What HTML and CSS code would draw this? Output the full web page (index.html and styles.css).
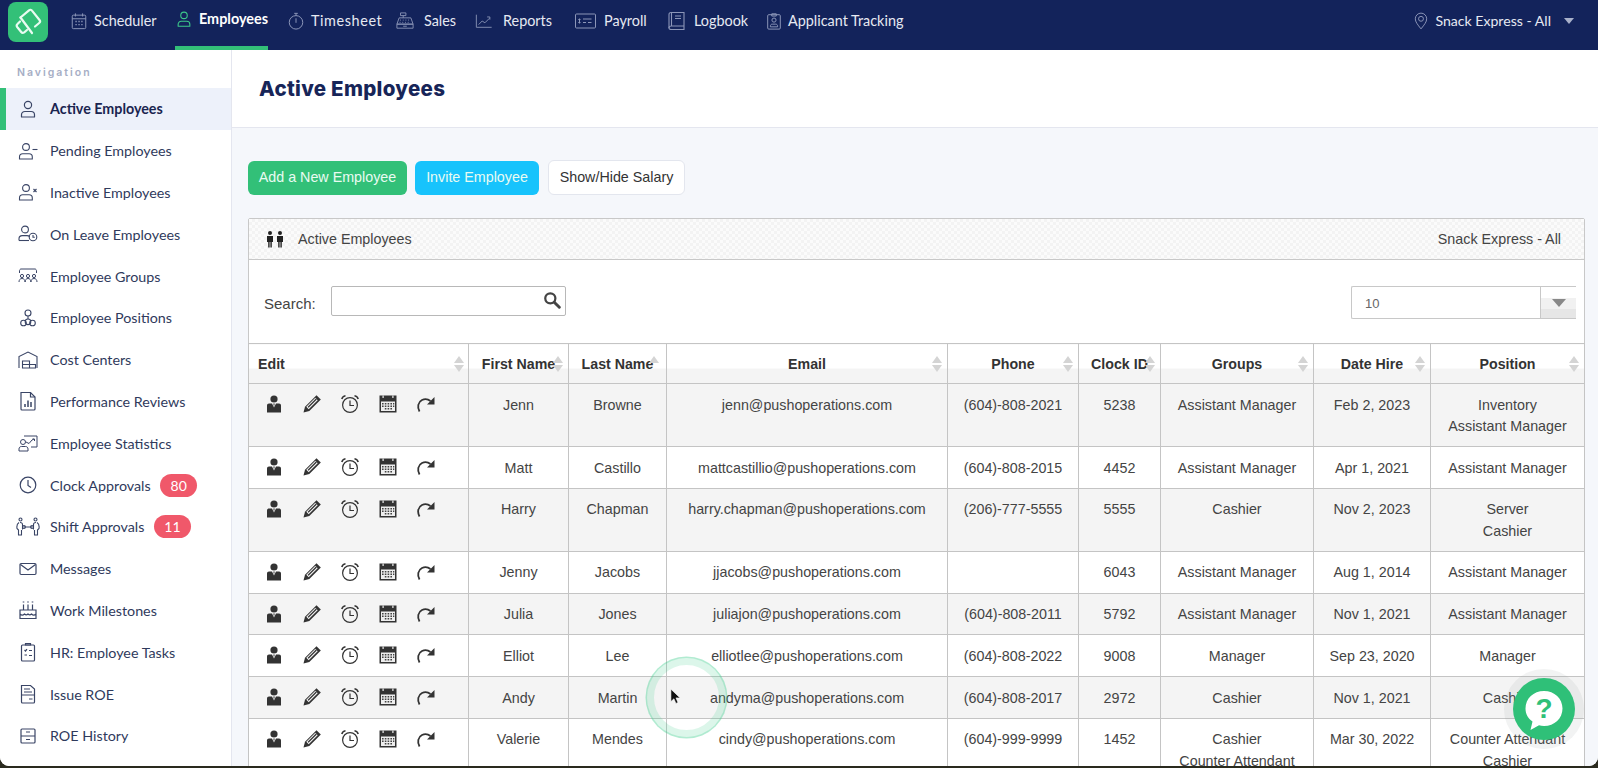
FILE: index.html
```html
<!DOCTYPE html>
<html lang="en">
<head>
<meta charset="utf-8">
<title>Active Employees</title>
<link rel="stylesheet" href="styles.css">
</head>
<body>
<svg class="defs" width="0" height="0" aria-hidden="true">
  <symbol id="i-user" viewBox="0 0 20 20"><g fill="none" stroke="currentColor" stroke-width="1.2"><circle cx="10" cy="6" r="3.6"/><path d="M3.5 18v-2.2c0-2 1.5-3.3 3.4-3.3h6.2c1.9 0 3.4 1.3 3.4 3.3V18z" stroke-linejoin="round"/></g></symbol>
  <symbol id="i-pending" viewBox="0 0 20 20"><g fill="none" stroke="currentColor" stroke-width="1.1"><circle cx="8" cy="6" r="3.4"/><path d="M1.5 18v-2c0-2 1.4-3.2 3.2-3.2h6.4c1.8 0 3.2 1.2 3.2 3.2v2z"/><path d="M14.5 8.5h5"/></g></symbol>
  <symbol id="i-inactive" viewBox="0 0 20 20"><g fill="none" stroke="currentColor" stroke-width="1.1"><circle cx="8" cy="6" r="3.4"/><path d="M1.5 18v-2c0-2 1.4-3.2 3.2-3.2h6.4c1.8 0 3.2 1.2 3.2 3.2v2z"/><path d="M15.5 7l3 3m0-3l-3 3"/></g></symbol>
  <symbol id="i-leave" viewBox="0 0 20 20"><g fill="none" stroke="currentColor" stroke-width="1.1"><circle cx="7" cy="5.5" r="3.4"/><path d="M1 16.5v-1.7c0-2 1.4-3.2 3.2-3.2H9c1 0 2 .3 2.6 1"/><path d="M1 16.5h10"/><circle cx="15" cy="13" r="3.8"/><path d="M15 11v2.2h1.8"/></g></symbol>
  <symbol id="i-groups" viewBox="0 0 20 20"><g fill="none" stroke="currentColor" stroke-width="1"><path d="M1.5 7V4.8C1.500 3.900 2.200 3 3 3h14c.8 0 1.500.9 1.500 1.800V7"/><circle cx="4" cy="10" r="1.600"/><circle cx="10" cy="10" r="1.600"/><circle cx="16" cy="10" r="1.600"/><path d="M1 16c0-2 1-3.500 3-3.500S7 14 7 16M7.200 16c0-2 .8-3.500 2.800-3.500s2.800 1.500 2.800 3.500M13 16c0-2 1-3.500 3-3.500s3 1.500 3 3.500"/></g></symbol>
  <symbol id="i-positions" viewBox="0 0 20 20"><g fill="none" stroke="currentColor" stroke-width="1.1"><circle cx="10" cy="5" r="3"/><path d="M10 8v3"/><circle cx="5.500" cy="15" r="2.800"/><circle cx="14.500" cy="15" r="2.800"/><circle cx="10" cy="13.800" r="2.800"/></g></symbol>
  <symbol id="i-cost" viewBox="0 0 20 20"><g fill="none" stroke="currentColor" stroke-width="1.1"><path d="M1 18V6.500L10 2l9 4.500V18"/><path d="M4.500 11h7v7h-7zM4.500 14.500h13V18h-6"/></g></symbol>
  <symbol id="i-review" viewBox="0 0 20 20"><g fill="none" stroke="currentColor" stroke-width="1.200"><path d="M3 1.500h9.500L17 6v12a1 1 0 0 1-1 1H4a1 1 0 0 1-1-1z"/><path d="M12.500 1.500V6H17"/><path d="M7 16v-3M10 16V9.500M13 16v-5" stroke-width="1.500"/></g></symbol>
  <symbol id="i-stats" viewBox="0 0 20 20"><g fill="none" stroke="currentColor" stroke-width="1"><path d="M6 3h13v11h-6"/><circle cx="5" cy="9" r="2.500"/><path d="M1 18v-2c0-1.500 1-2.500 2.500-2.500h4c1.500 0 2.500 1 2.500 2.500v2z"/><path d="M8 9l3 1.500L14 7l2-1m-1.500 0H16.500V8"/></g></symbol>
  <symbol id="i-clock" viewBox="0 0 20 20"><g fill="none" stroke="currentColor" stroke-width="1.200"><circle cx="10" cy="10" r="7.800"/><path d="M10 5v5.500l3 2"/></g></symbol>
  <symbol id="i-shift" viewBox="0 0 24 20"><g fill="none" stroke="currentColor" stroke-width="1.100"><circle cx="4.500" cy="2.500" r="1.500"/><circle cx="19.500" cy="2.500" r="1.500"/><path d="M3 5.500c-1.500 1-2.500 3-2 6l1.500 1.500v5h3v-5M21 5.500c1.500 1 2.500 3 2 6L21.500 13v5h-3v-5"/><path d="M4 5.500c1.500 0 2.500 1 2.500 2v5M20 5.500c-1.500 0-2.500 1-2.500 2v5"/><path d="M8 10h8"/><circle cx="8" cy="10" r="1.400"/><circle cx="16" cy="10" r="1.400"/></g></symbol>
  <symbol id="i-mail" viewBox="0 0 20 20"><g fill="none" stroke="currentColor" stroke-width="1.200"><rect x="2" y="4.500" width="16" height="11" rx="1.200"/><path d="M2.500 5.500L10 11l7.500-5.500"/></g></symbol>
  <symbol id="i-cake" viewBox="0 0 20 20"><g fill="none" stroke="currentColor" stroke-width="1.200"><path d="M2 18.500h16V10H2zM2 14c1.500 1.500 3 1.500 4.500 0 1.200 1.200 2.300 1.200 3.500 0 1.200 1.200 2.300 1.200 3.500 0 1.500 1.500 3 1.500 4.500 0"/><path d="M5.500 10V4.500M10 10V4.500M14.500 10V4.500"/><path d="M5.500 1.500v1M10 1.500v1M14.500 1.500v1" stroke-width="1.600"/></g></symbol>
  <symbol id="i-tasks" viewBox="0 0 20 20"><g fill="none" stroke="currentColor" stroke-width="1.200"><rect x="3.500" y="3" width="13" height="16" rx="1"/><path d="M7.500 3V1.500h5V3z"/><path d="M6.500 8l1 1 1.500-1.800M11 8.500h3M6.500 13h2.500M11 13.500h3"/></g></symbol>
  <symbol id="i-roe" viewBox="0 0 20 20"><g fill="none" stroke="currentColor" stroke-width="1.200"><path d="M3.500 1.500h9L16.500 5v13a1 1 0 0 1-1 1h-11a1 1 0 0 1-1-1z"/><path d="M6 5h6M6 8h8M3.500 11h13M11 15h3.500" /></g></symbol>
  <symbol id="i-history" viewBox="0 0 20 20"><g fill="none" stroke="currentColor" stroke-width="1.200"><rect x="3" y="3" width="14" height="14" rx="1"/><path d="M3 10h14M8 6h4M8 13.500h4"/></g></symbol>
  <symbol id="i-cal" viewBox="0 0 20 20"><g fill="none" stroke="currentColor" stroke-width="1.100"><rect x="2.500" y="3.500" width="15" height="15" rx="1.200"/><path d="M2.500 7.500h15M6 1.500v3.500M14 1.500v3.500"/><path d="M6 10.500h1.500M9.300 10.500h1.500M12.500 10.500H14M6 14h1.500M9.300 14h1.500M12.500 14H14" stroke-width="1.600"/></g></symbol>
  <symbol id="i-timer" viewBox="0 0 20 20"><g fill="none" stroke="currentColor" stroke-width="1.100"><circle cx="10" cy="11.500" r="7.500"/><path d="M10 7v5M8 1.500h4M10 1.500V4"/></g></symbol>
  <symbol id="i-sales" viewBox="0 0 20 20"><g fill="none" stroke="currentColor" stroke-width="1"><path d="M5 1h6v3H5zM8 4v2.500"/><path d="M3.500 6.500h13l2.500 7H1z"/><path d="M1 13.500h18V18H1z"/><path d="M4.500 9h1M7.500 9h1M10.500 9h1M13.500 9h1M4 11.500h1M7 11.500h1M10 11.500h1M13 11.500h1M8 15.800h4"/></g></symbol>
  <symbol id="i-reports" viewBox="0 0 20 20"><g fill="none" stroke="currentColor" stroke-width="1"><path d="M1.500 3v14h17"/><path d="M4 14l4-4 3 2 5-5M13.500 5.500h3v3"/></g></symbol>
  <symbol id="i-payroll" viewBox="0 0 22 20"><g fill="none" stroke="currentColor" stroke-width="1"><rect x="1" y="3" width="20" height="14" rx="1"/><path d="M8.500 8h8.500M8.500 11.500h3M13.500 11.500h3.500M5 7.500v5M3.800 8.500H6M3.800 11.500H6"/></g></symbol>
  <symbol id="i-book" viewBox="0 0 20 20"><g fill="none" stroke="currentColor" stroke-width="1.100"><path d="M4 1.500h13V15H4.500C3 15 2 16 2 17s1 1.500 2.500 1.500H17V15"/><path d="M2 17V3.500c0-1 1-2 2-2"/><path d="M4.500 1.500V15M8 5h6M8 7.500h6"/></g></symbol>
  <symbol id="i-badge" viewBox="0 0 20 20"><g fill="none" stroke="currentColor" stroke-width="1.100"><rect x="3" y="3" width="14" height="16" rx="1.200"/><path d="M7.500 4.500V2h5v2.500z"/><circle cx="10" cy="9" r="2.300"/><path d="M6 16.500v-1c0-1 .8-2 2-2h4c1.200 0 2 1 2 2v1z"/></g></symbol>
  <symbol id="i-pin" viewBox="0 0 16 20"><g fill="none" stroke="currentColor" stroke-width="1.100"><path d="M8 19C4 14 1.500 11 1.500 7.500a6.500 6.500 0 0 1 13 0C14.500 11 12 14 8 19z"/><circle cx="8" cy="7.500" r="2.800"/></g></symbol>
  <symbol id="i-a-person" viewBox="0 0 20 20"><g fill="#333"><circle cx="10" cy="5" r="3.600"/><path d="M3 18.500v-7c0-1.200.8-2 2-2h3l2 4 2-4h3c1.200 0 2 .8 2 2v7z"/><path d="M9.300 9.500h1.400l-.7 3.500z" fill="#333"/></g></symbol>
  <symbol id="i-a-pencil" viewBox="0 0 20 20"><path d="M1.500 18.500l1.500-5.800L14.500 1.200l4.300 4.300L7.300 17z" fill="#333"/><path d="M4.300 12.800l9-9 2.400 2.400-9 9z" fill="#f4f4f4"/><path d="M5.700 12.800l8.200-8.200.9.900-8.200 8.200z" fill="#333"/></symbol>
  <symbol id="i-a-alarm" viewBox="0 0 20 20"><g fill="none" stroke="#333" stroke-width="1.200"><circle cx="10" cy="11" r="7.400"/><path d="M10 6.500V11.500h4"/><path d="M1.800 5c.5-1.800 1.800-3 3.700-3.300M18.200 5c-.5-1.800-1.800-3-3.700-3.300" stroke-width="1.600"/></g></symbol>
  <symbol id="i-a-cal" viewBox="0 0 20 20"><path fill="#333" d="M1.500 1.500h17v17h-17z"/><path fill="#eee" d="M3 7.500h14v9.500H3z"/><g fill="#444"><path d="M4 9h1.600v1.400H4zM6.800 9h1.600v1.400H6.800zM9.600 9h1.600v1.400H9.600zM12.400 9H14v1.400h-1.600zM15 9h1.300v1.400H15zM4 11.500h1.600v1.400H4zM6.800 11.500h1.600v1.400H6.800zM9.600 11.500h1.600v1.400H9.600zM12.400 11.500H14v1.400h-1.600zM15 11.500h1.300v1.400H15zM6.800 14h1.600v1.400H6.800zM9.600 14h1.600v1.400H9.600zM12.400 14H14v1.400h-1.600z"/></g><path fill="#eee" d="M4.500 1.500h1.200v2.500H4.500zM14.300 1.500h1.200v2.500h-1.200z"/></symbol>
  <symbol id="i-a-redo" viewBox="0 0 20 20"><path fill="none" stroke="#333" stroke-width="1.800" d="M3.500 17.500C1 13 2 8 6 6c3-1.500 6-1 8.500 1"/><path fill="#333" d="M18.500 3v7.500H11z"/></symbol>
</svg>

<div class="page">
  <header class="topbar">
    <div class="logo">
      <svg viewBox="0 0 40 40" width="40" height="40"><g fill="none" stroke="#e9fbf1" stroke-width="2.200" stroke-linejoin="round" stroke-linecap="round"><path d="M12.500 15.500L21 8.300c1-.8 2.300-.7 3 .3L31.500 18c.8 1 .7 2.200-.3 3L27 24.500"/><path d="M12.500 15.500L24 31"/><path d="M12 19.500L9.500 22c-1 .9-1 2-.3 3l4 5c.8 1 2 1 3 .3L19 28"/></g></svg>
    </div>
    <nav class="topnav">
      <a class="tn tn-sch"><svg class="ti"><use href="#i-cal"/></svg>Scheduler</a>
      <a class="tn tn-emp active"><svg class="ti"><use href="#i-user"/></svg>Employees</a>
      <a class="tn tn-time"><svg class="ti"><use href="#i-timer"/></svg>Timesheet</a>
      <a class="tn tn-sal"><svg class="ti"><use href="#i-sales"/></svg>Sales</a>
      <a class="tn tn-rep"><svg class="ti"><use href="#i-reports"/></svg>Reports</a>
      <a class="tn tn-pay"><svg class="ti"><use href="#i-payroll"/></svg>Payroll</a>
      <a class="tn tn-log"><svg class="ti"><use href="#i-book"/></svg>Logbook</a>
      <a class="tn tn-app"><svg class="ti"><use href="#i-badge"/></svg>Applicant Tracking</a>
    </nav>
    <div class="loc"><svg class="pin"><use href="#i-pin"/></svg><span>Snack Express - All</span><i class="caret"></i></div>
  </header>

  <div class="body">
    <aside class="side">
      <div class="side-label">Navigation</div>
      <a class="si current"><svg class="sic"><use href="#i-user"/></svg>Active Employees</a>
      <a class="si"><svg class="sic"><use href="#i-pending"/></svg>Pending Employees</a>
      <a class="si"><svg class="sic"><use href="#i-inactive"/></svg>Inactive Employees</a>
      <a class="si"><svg class="sic"><use href="#i-leave"/></svg>On Leave Employees</a>
      <a class="si"><svg class="sic"><use href="#i-groups"/></svg>Employee Groups</a>
      <a class="si"><svg class="sic"><use href="#i-positions"/></svg>Employee Positions</a>
      <a class="si"><svg class="sic"><use href="#i-cost"/></svg>Cost Centers</a>
      <a class="si"><svg class="sic"><use href="#i-review"/></svg>Performance Reviews</a>
      <a class="si"><svg class="sic"><use href="#i-stats"/></svg>Employee Statistics</a>
      <a class="si"><svg class="sic"><use href="#i-clock"/></svg>Clock Approvals<b class="badge">80</b></a>
      <a class="si"><svg class="sic wide"><use href="#i-shift"/></svg>Shift Approvals<b class="badge">11</b></a>
      <a class="si"><svg class="sic"><use href="#i-mail"/></svg>Messages</a>
      <a class="si"><svg class="sic"><use href="#i-cake"/></svg>Work Milestones</a>
      <a class="si"><svg class="sic"><use href="#i-tasks"/></svg>HR: Employee Tasks</a>
      <a class="si"><svg class="sic"><use href="#i-roe"/></svg>Issue ROE</a>
      <a class="si"><svg class="sic"><use href="#i-history"/></svg>ROE History</a>
    </aside>

    <main class="main">
      <div class="page-head"><h1>Active Employees</h1></div>
      <div class="content">
        <div class="actions">
          <button class="btn green">Add a New Employee</button>
          <button class="btn blue">Invite Employee</button>
          <button class="btn plain">Show/Hide Salary</button>
        </div>
        <section class="panel">
          <div class="panel-head">
            <span class="ph-left">
              <svg class="people" viewBox="0 0 20 18"><g fill="#222"><circle cx="5" cy="3" r="2"/><circle cx="15" cy="3" r="2"/><path d="M2 6h6v6H6.800v5.500H5.400V12h-.8v5.500H3.200V12H2zM12 6h6v6h-1.200v5.500h-1.400V12h-.8v5.500h-1.400V12H12z"/></g></svg>
              Active Employees
            </span>
            <span>Snack Express - All</span>
          </div>
          <div class="filters">
            <label class="search">Search:
              <span class="search-box">
                <svg class="mag" viewBox="0 0 16 16"><circle cx="6.500" cy="6.500" r="4.500" fill="none" stroke="#444" stroke-width="2"/><path d="M10 10l4.500 4.500" stroke="#444" stroke-width="2.600" stroke-linecap="round"/></svg>
              </span>
            </label>
            <div class="select"><span class="sel-val">10</span><span class="sel-btn"><i></i></span></div>
          </div>
          <table class="grid">
            <colgroup>
              <col class="c1"><col class="c2"><col class="c3"><col class="c4"><col class="c5"><col class="c6"><col class="c7"><col class="c8"><col class="c9">
            </colgroup>
            <thead>
              <tr>
                <th class="left sort tail">Edit</th>
                <th class="sort">First Name</th>
                <th class="asc">Last Name</th>
                <th class="sort">Email</th>
                <th class="sort">Phone</th>
                <th class="sort">Clock ID</th>
                <th class="sort">Groups</th>
                <th class="sort">Date Hire</th>
                <th class="sort">Position</th>
              </tr>
            </thead>
            <tbody>
              <tr class="odd">
                <td class="acts"><svg><use href="#i-a-person"/></svg><svg><use href="#i-a-pencil"/></svg><svg><use href="#i-a-alarm"/></svg><svg><use href="#i-a-cal"/></svg><svg><use href="#i-a-redo"/></svg></td>
                <td>Jenn</td><td>Browne</td><td>jenn@pushoperations.com</td><td>(604)-808-2021</td><td>5238</td><td>Assistant Manager</td><td>Feb 2, 2023</td><td>Inventory<br>Assistant Manager</td>
              </tr>
              <tr>
                <td class="acts"><svg><use href="#i-a-person"/></svg><svg><use href="#i-a-pencil"/></svg><svg><use href="#i-a-alarm"/></svg><svg><use href="#i-a-cal"/></svg><svg><use href="#i-a-redo"/></svg></td>
                <td>Matt</td><td>Castillo</td><td>mattcastillio@pushoperations.com</td><td>(604)-808-2015</td><td>4452</td><td>Assistant Manager</td><td>Apr 1, 2021</td><td>Assistant Manager</td>
              </tr>
              <tr class="odd">
                <td class="acts"><svg><use href="#i-a-person"/></svg><svg><use href="#i-a-pencil"/></svg><svg><use href="#i-a-alarm"/></svg><svg><use href="#i-a-cal"/></svg><svg><use href="#i-a-redo"/></svg></td>
                <td>Harry</td><td>Chapman</td><td>harry.chapman@pushoperations.com</td><td>(206)-777-5555</td><td>5555</td><td>Cashier</td><td>Nov 2, 2023</td><td>Server<br>Cashier</td>
              </tr>
              <tr>
                <td class="acts"><svg><use href="#i-a-person"/></svg><svg><use href="#i-a-pencil"/></svg><svg><use href="#i-a-alarm"/></svg><svg><use href="#i-a-cal"/></svg><svg><use href="#i-a-redo"/></svg></td>
                <td>Jenny</td><td>Jacobs</td><td>jjacobs@pushoperations.com</td><td></td><td>6043</td><td>Assistant Manager</td><td>Aug 1, 2014</td><td>Assistant Manager</td>
              </tr>
              <tr class="odd">
                <td class="acts"><svg><use href="#i-a-person"/></svg><svg><use href="#i-a-pencil"/></svg><svg><use href="#i-a-alarm"/></svg><svg><use href="#i-a-cal"/></svg><svg><use href="#i-a-redo"/></svg></td>
                <td>Julia</td><td>Jones</td><td>juliajon@pushoperations.com</td><td>(604)-808-2011</td><td>5792</td><td>Assistant Manager</td><td>Nov 1, 2021</td><td>Assistant Manager</td>
              </tr>
              <tr>
                <td class="acts"><svg><use href="#i-a-person"/></svg><svg><use href="#i-a-pencil"/></svg><svg><use href="#i-a-alarm"/></svg><svg><use href="#i-a-cal"/></svg><svg><use href="#i-a-redo"/></svg></td>
                <td>Elliot</td><td>Lee</td><td>elliotlee@pushoperations.com</td><td>(604)-808-2022</td><td>9008</td><td>Manager</td><td>Sep 23, 2020</td><td>Manager</td>
              </tr>
              <tr class="odd">
                <td class="acts"><svg><use href="#i-a-person"/></svg><svg><use href="#i-a-pencil"/></svg><svg><use href="#i-a-alarm"/></svg><svg><use href="#i-a-cal"/></svg><svg><use href="#i-a-redo"/></svg></td>
                <td>Andy</td><td>Martin</td><td>andyma@pushoperations.com</td><td>(604)-808-2017</td><td>2972</td><td>Cashier</td><td>Nov 1, 2021</td><td>Cashier</td>
              </tr>
              <tr>
                <td class="acts"><svg><use href="#i-a-person"/></svg><svg><use href="#i-a-pencil"/></svg><svg><use href="#i-a-alarm"/></svg><svg><use href="#i-a-cal"/></svg><svg><use href="#i-a-redo"/></svg></td>
                <td>Valerie</td><td>Mendes</td><td>cindy@pushoperations.com</td><td>(604)-999-9999</td><td>1452</td><td>Cashier<br>Counter Attendant</td><td>Mar 30, 2022</td><td>Counter Attendant<br>Cashier</td>
              </tr>
            </tbody>
          </table>
        </section>
      </div>
    </main>
  </div>

  <div class="click-ring"></div>
  <svg class="cursor" viewBox="0 0 12 18"><path d="M1 1v13.500l3.300-3 2.200 5 2.200-1-2.200-5h4.500z" fill="#111" stroke="#fff" stroke-width=".6"/></svg>
  <div class="help">
    <svg viewBox="0 0 62 62" width="62" height="62"><path d="M31 13c10.500 0 18.500 7.500 18.500 17.500S41.500 48 31 48c-1.800 0-3.500-.2-5-.7L17.500 52l2-8.500C15 40.500 12.500 36 12.500 30.500 12.500 20.500 20.500 13 31 13z" fill="#fff"/><text x="31" y="40" text-anchor="middle" class="q">?</text></svg>
  </div>
</div>
</body>
</html>
```
FILE: styles.css
```css
* { box-sizing: border-box; }
html, body { margin: 0; height: 768px; overflow: hidden; background: #2a2a1e; }
.defs { position: absolute; }
.page {
  position: relative;
  height: 766px;
  overflow: hidden;
  background: #fff;
  border-radius: 0 0 9px 9px;
  display: flex;
  flex-direction: column;
  font-family: "Liberation Sans", Arial, sans-serif;
}

/* top bar */
.topbar {
  height: 50px;
  flex: none;
  background: #13235b;
  display: flex;
  align-items: flex-start;
  font-family: Lato, sans-serif;
  font-size: 14.400px;
  color: #e6e9f2;
}
.logo {
  width: 40px; height: 40px;
  margin: 2px 0 0 8px;
  border-radius: 8px;
  background: #33c078;
  flex: none;
}
.topnav { display: flex; margin-left: 22px; height: 50px; }
.tn {
  display: flex;
  align-items: center;
  height: 41px;
  white-space: nowrap;
}
.tn .ti { width: 18px; height: 20px; margin-right: 6px; color: #8c96b8; flex: none; }
.tn-sch { width: 105px; }
.tn-emp { width: 93px; font-weight: 700; color: #fff; margin-right: 19px; height: 50px; padding-bottom: 9px; border-bottom: 4px solid #33c078; }
.tn-emp .ti { color: #3cc98a; width: 18px; }
.tn-time { width: 109px; letter-spacing: .6px; }
.tn-sal { width: 79px; }
.tn-sal .ti { margin-right: 10px; }
.tn-rep { width: 99px; }
.tn-rep .ti { margin-right: 10px; }
.tn-pay { width: 93px; }
.tn-pay .ti { width: 23px; margin-right: 7px; }
.tn-log { width: 98px; }
.tn-log .ti { width: 20px; margin-right: 7px; }
.tn-app .ti { width: 18px; margin-right: 5px; }
.loc { margin-left: auto; height: 41px; display: flex; align-items: center; padding-right: 24px; font-size: 14.100px; }
.pin { width: 14px; height: 18px; color: #8c96b8; margin-right: 7px; }
.caret { width: 0; height: 0; margin-left: 13px; border: 5.500px solid transparent; border-top: 6px solid #a9b1ca; border-bottom: 0; }

/* layout */
.body { flex: 1; display: flex; min-height: 0; }
.side {
  width: 232px;
  flex: none;
  background: #fff;
  border-right: 1px solid #e4e6ef;
  font-family: Lato, sans-serif;
  font-size: 14.300px;
  color: #2f3a5c;
  padding-top: 17px;
}
.side-label {
  font-family: Inter, sans-serif;
  font-size: 10.500px;
  font-weight: 600;
  letter-spacing: 2px;
  color: #a6aec5;
  padding-left: 17px;
  height: 21px;
  line-height: 12px;
}
.si {
  display: flex;
  align-items: center;
  height: 41.800px;
  padding-left: 18px;
}
.sic { width: 20px; height: 20px; margin-right: 12px; color: #3a4566; flex: none; }
.sic.wide { width: 24px; margin-left: -2px; margin-right: 10px; }
.si.current {
  background: #edf1fa;
  border-left: 6px solid #33c078;
  padding-left: 12px;
  font-weight: 700;
  color: #1a2550;
}
.badge {
  margin-left: 9.500px;
  min-width: 37px;
  height: 23px;
  line-height: 23px;
  padding: 0 8px;
  border-radius: 12px;
  background: #f0586a;
  color: #fff;
  font-weight: 400;
  text-align: center;
  font-size: 14px;
}
.main { flex: 1; min-width: 0; background: #f5f7fb; }
.page-head {
  height: 78px;
  background: #fff;
  border-bottom: 1px solid #e4e6ef;
  padding-left: 27px;
}
.page-head h1 {
  margin: 0;
  padding-top: 26px;
  font-family: Inter, sans-serif;
  font-size: 20.500px;
  line-height: 25px;
  font-weight: 800;
  letter-spacing: .3px;
  color: #172558;
}
.content { padding: 32px 13px 0 16px; }
.actions { display: flex; align-items: center; gap: 8px; height: 35px; }
.btn {
  height: 34px;
  font-family: "Liberation Sans", Arial, sans-serif;
  font-size: 14.300px;
  border-radius: 6px;
  border: 0;
  padding: 0 0 1px;
  color: #e9fbf2;
}
.green { background: #32c078; width: 159px; }
.blue { background: #17c3fc; width: 124px; }
.plain { background: #fff; color: #333; width: 137px; height: 35px; border: 1px solid #e3e6ee; margin-left: 1px; }

.panel {
  margin-top: 23px;
  border: 1px solid #c8c8c8;
  border-radius: 2px 2px 0 0;
  background: #fff;
  width: 1337px;
}
.panel-head {
  height: 41px;
  display: flex;
  align-items: center;
  justify-content: space-between;
  padding: 0 23px 1px 16px;
  font-size: 14.300px;
  color: #444;
  border-bottom: 1px solid #c8c8c8;
  background-color: #fafafa;
  background-image: repeating-conic-gradient(#f3f3f3 0 25%, #fbfbfb 0 50%);
  background-size: 6px 6px;
}
.ph-left { display: flex; align-items: center; }
.people { width: 20px; height: 18px; margin-right: 13px; }
.filters {
  height: 83px;
  display: flex;
  justify-content: space-between;
  align-items: flex-start;
  padding: 26px 8px 0 15px;
}
.search { display: flex; align-items: flex-start; font-size: 15px; color: #444; line-height: 36px; }
.search-box {
  position: relative;
  width: 235px;
  height: 30px;
  margin-left: 15px;
  border: 1px solid #b8b8b8;
  border-radius: 2px;
  background: #fff;
  display: block;
}
.mag { position: absolute; right: 4px; top: 4px; width: 18px; height: 18px; }
.select {
  width: 225px;
  height: 33px;
  margin-top: 0;
  border: 1px solid #c8c8c8;
  border-right: 0;
  border-radius: 2px 0 0 2px;
  display: flex;
  font-size: 13px;
  color: #666;
}
.sel-val { flex: 1; padding: 9px 0 0 13px; }
.sel-btn {
  width: 36px;
  border-left: 1px solid #c8c8c8;
  background: linear-gradient(#fff 0 35%, #f1f1f1 35% 70%, #e6e6e6 70%);
  display: flex;
  align-items: center;
  justify-content: center;
}
.sel-btn i { width: 0; height: 0; border: 7px solid transparent; border-top: 8px solid #888; border-bottom: 0; }

/* table */
.grid {
  width: 1336px;
  margin-left: -1px;
  table-layout: fixed;
  border-collapse: collapse;
  font-size: 14.300px;
  color: #444;
}
.c1 { width: 220px; }
.c2 { width: 100px; }
.c3 { width: 98px; }
.c4 { width: 281px; }
.c5 { width: 131px; }
.c6 { width: 82px; }
.c7 { width: 153px; }
.c8 { width: 117px; }
.c9 { width: 154px; }
.grid th {
  position: relative;
  height: 40px;
  border: 1px solid #c4c4c4;
  font-weight: 700;
  font-size: 14.200px;
  color: #333;
  padding: 0;
  text-align: center;
  background: linear-gradient(#fff 0 24px, #f4f4f4 24px);
}
.grid th.left { text-align: left; padding-left: 9px; }
.grid th.sort::before, .grid th.asc::before {
  content: "";
  position: absolute;
  right: 5.500px;
  top: 12px;
  border: 5px solid transparent;
  border-top: 0;
  border-bottom: 7px solid #d4d4d4;
}
.grid th.sort::after {
  content: "";
  position: absolute;
  right: 5.500px;
  top: 21px;
  border: 5px solid transparent;
  border-bottom: 0;
  border-top: 7px solid #d4d4d4;
}
.grid th.asc::before { right: 7px; }
.grid th.left::before, .grid th.left::after { right: 4px; }
.grid td {
  border: 1px solid #c4c4c4;
  padding: 10.500px 4px 9.100px;
  line-height: 21.200px;
  text-align: center;
  vertical-align: top;
  background: #fff;
  white-space: nowrap;
}
.grid tr.odd td { background: #f4f4f4; }
.grid td.acts { text-align: left; padding: 10px 0 0 15px; line-height: 0; }
.acts svg { width: 20px; height: 20px; margin-right: 18px; vertical-align: top; }

/* overlays */
.click-ring {
  position: absolute;
  left: 647px; top: 658px;
  width: 79px; height: 79px;
  border-radius: 50%;
  border: 7px solid rgba(60, 205, 140, .18);
  box-shadow: 0 0 0 1.500px rgba(60, 205, 140, .4);
}
.cursor { position: absolute; left: 670px; top: 688px; width: 11px; height: 17px; }
.help {
  position: absolute;
  left: 1513px; top: 678px;
  width: 62px; height: 62px;
  border-radius: 50%;
  background: #2fc078;
  box-shadow: 0 0 0 9px rgba(150, 155, 160, .12);
}
.q { font-family: "Liberation Sans", sans-serif; font-size: 28px; font-weight: 700; fill: #2fc078; }
```
